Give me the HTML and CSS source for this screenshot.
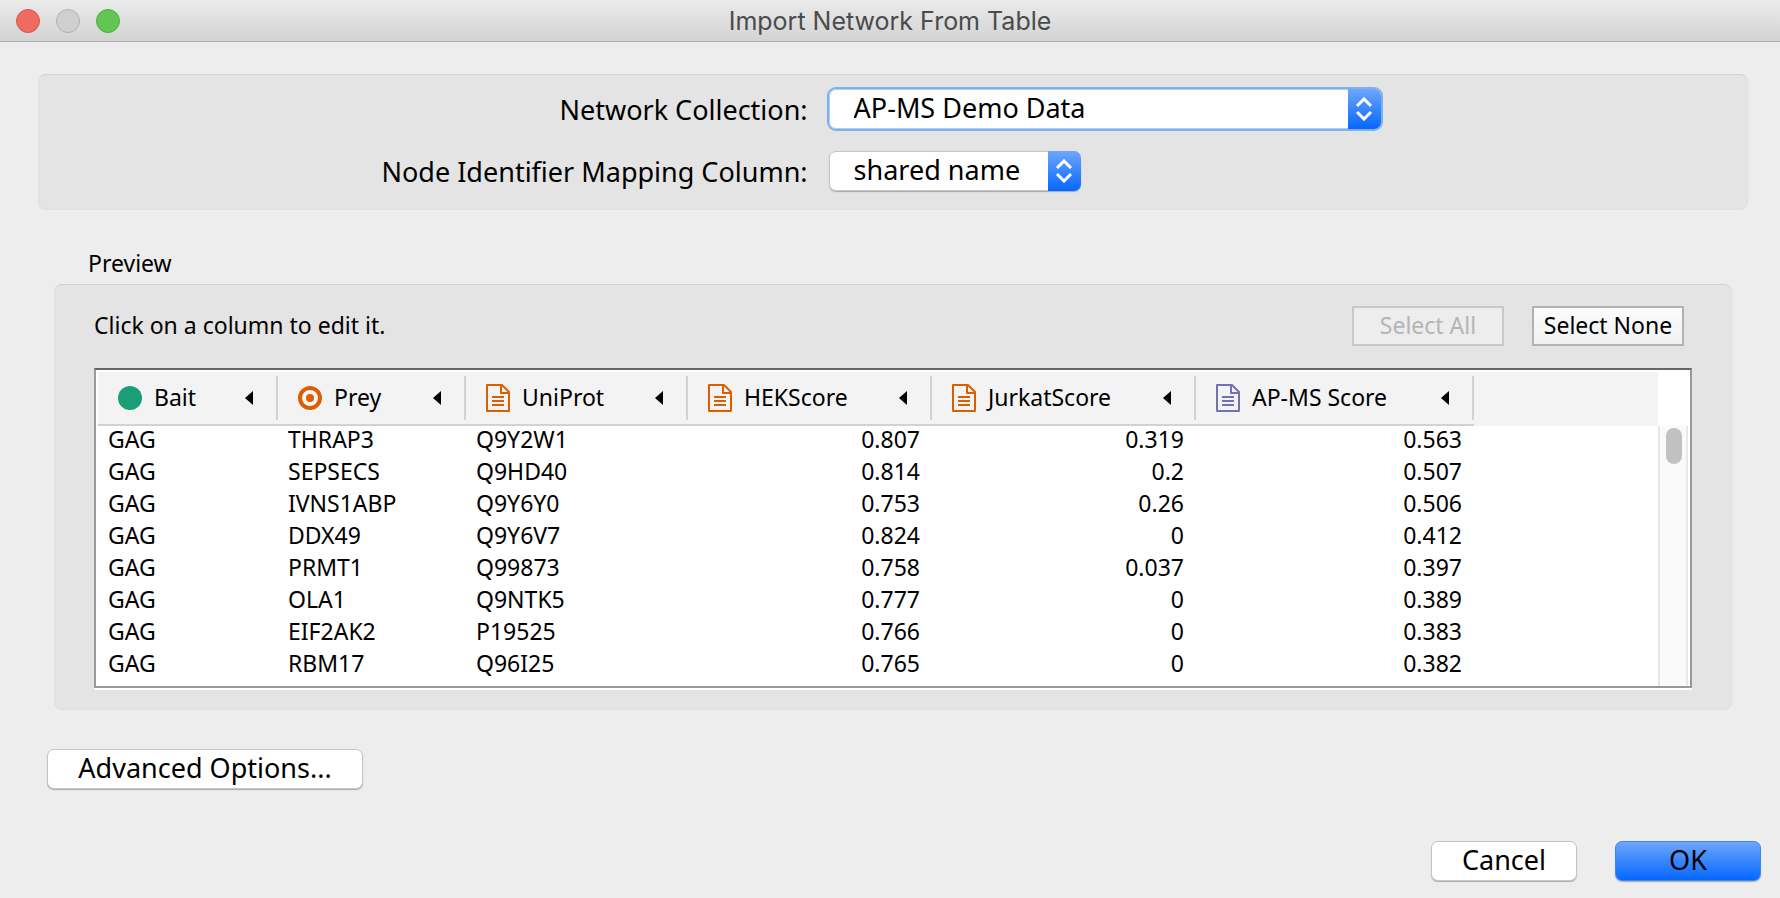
FILE: index.html
```html
<!DOCTYPE html>
<html lang="en">
<head>
<meta charset="utf-8">
<title>Import Network From Table</title>
<link rel="stylesheet" href="styles.css">
</head>
<body>
<svg class="defs" aria-hidden="true">
  <symbol id="doc" viewBox="0 0 24 28">
    <path d="M1 1H16L23 8V27H1Z M15 1V9H23" fill="none" stroke="currentColor" stroke-width="2" stroke-linejoin="round"/>
    <path d="M6 13H18M6 17H18M6 21H18" fill="none" stroke="currentColor" stroke-width="2"/>
  </symbol>
  <symbol id="tri" viewBox="0 0 8 14"><path d="M0 7L8 0V14Z" fill="currentColor"/></symbol>
  <symbol id="updown" viewBox="0 0 16 24">
    <path d="M1 9L8 2L15 9M1 15L8 22L15 15" fill="none" stroke="currentColor" stroke-width="3"/>
  </symbol>
</svg>
<div class="window">
  <header class="titlebar">
    <div class="lights">
      <button class="light light-close" type="button" aria-label="Close"></button>
      <button class="light light-min" type="button" aria-label="Minimize" disabled></button>
      <button class="light light-zoom" type="button" aria-label="Zoom"></button>
    </div>
    <h1 class="title">Import Network From Table</h1>
  </header>
  <main class="content">
    <section class="panel form">
      <label for="collection">Network Collection:</label>
      <div class="combo combo-wide combo-focus">
        <select id="collection"><option>AP-MS Demo Data</option></select>
        <span class="combo-arrow"><svg><use href="#updown"/></svg></span>
      </div>
      <label for="mapping">Node Identifier Mapping Column:</label>
      <div class="combo">
        <select id="mapping"><option>shared name</option></select>
        <span class="combo-arrow"><svg><use href="#updown"/></svg></span>
      </div>
    </section>
    <section class="preview">
      <h2 class="preview-title">Preview</h2>
      <div class="panel preview-panel">
        <div class="toolbar">
          <p class="hint">Click on a column to edit it.</p>
          <button class="flat" type="button" disabled>Select All</button>
          <button class="flat" type="button">Select None</button>
        </div>
        <div class="grid-frame">
          <table class="grid">
            <colgroup><col class="c1"><col class="c2"><col class="c3"><col class="c4"><col class="c5"><col class="c6"><col></colgroup>
            <thead>
              <tr>
                <th><div class="head"><svg class="node green" viewBox="0 0 24 24"><circle cx="12" cy="12" r="12" fill="currentColor"/></svg><span>Bait</span><svg class="tri"><use href="#tri"/></svg></div></th>
                <th><div class="head"><svg class="node orange" viewBox="0 0 24 24"><circle cx="12" cy="12" r="10" fill="none" stroke="currentColor" stroke-width="4"/><circle cx="12" cy="12" r="4" fill="currentColor"/></svg><span>Prey</span><svg class="tri"><use href="#tri"/></svg></div></th>
                <th><div class="head"><svg class="doc orange"><use href="#doc"/></svg><span>UniProt</span><svg class="tri"><use href="#tri"/></svg></div></th>
                <th><div class="head"><svg class="doc orange"><use href="#doc"/></svg><span>HEKScore</span><svg class="tri"><use href="#tri"/></svg></div></th>
                <th><div class="head"><svg class="doc orange"><use href="#doc"/></svg><span>JurkatScore</span><svg class="tri"><use href="#tri"/></svg></div></th>
                <th><div class="head"><svg class="doc purple"><use href="#doc"/></svg><span>AP-MS Score</span><svg class="tri"><use href="#tri"/></svg></div></th>
                <td class="filler"></td>
              </tr>
            </thead>
            <tbody>
              <tr><td>GAG</td><td>THRAP3</td><td>Q9Y2W1</td><td class="num">0.807</td><td class="num">0.319</td><td class="num">0.563</td><td></td></tr>
              <tr><td>GAG</td><td>SEPSECS</td><td>Q9HD40</td><td class="num">0.814</td><td class="num">0.2</td><td class="num">0.507</td><td></td></tr>
              <tr><td>GAG</td><td>IVNS1ABP</td><td>Q9Y6Y0</td><td class="num">0.753</td><td class="num">0.26</td><td class="num">0.506</td><td></td></tr>
              <tr><td>GAG</td><td>DDX49</td><td>Q9Y6V7</td><td class="num">0.824</td><td class="num">0</td><td class="num">0.412</td><td></td></tr>
              <tr><td>GAG</td><td>PRMT1</td><td>Q99873</td><td class="num">0.758</td><td class="num">0.037</td><td class="num">0.397</td><td></td></tr>
              <tr><td>GAG</td><td>OLA1</td><td>Q9NTK5</td><td class="num">0.777</td><td class="num">0</td><td class="num">0.389</td><td></td></tr>
              <tr><td>GAG</td><td>EIF2AK2</td><td>P19525</td><td class="num">0.766</td><td class="num">0</td><td class="num">0.383</td><td></td></tr>
              <tr><td>GAG</td><td>RBM17</td><td>Q96I25</td><td class="num">0.765</td><td class="num">0</td><td class="num">0.382</td><td></td></tr>
            </tbody>
          </table>
          <div class="scroll"><div class="thumb"></div></div>
        </div>
      </div>
    </section>
    <div class="advanced"><button class="push push-wide" type="button">Advanced Options...</button></div>
    <footer class="actions">
      <button class="push" type="button">Cancel</button>
      <button class="push push-default" type="button">OK</button>
    </footer>
  </main>
</div>
</body>
</html>
```

FILE: styles.css
```css
* { box-sizing: border-box; }
body {
  margin: 0;
  background: #ededed;
  color: #000;
  font-family: "Noto Sans", "Open Sans", sans-serif;
  font-size: 27px;
}
button, select { font: inherit; color: inherit; margin: 0; }
h1, h2, p { margin: 0; font-weight: 400; }
.defs { display: none; }
.window { min-height: 100vh; display: flex; flex-direction: column; background: #ededed; }

.titlebar {
  display: grid;
  grid-template-columns: 1fr auto 1fr;
  align-items: center;
  height: 42px;
  padding: 0 16px;
  background: linear-gradient(#ebebeb, #d3d3d3);
  border-bottom: 1px solid #adadad;
}
.lights { display: flex; gap: 16px; }
.light { width: 24px; height: 24px; padding: 0; border: 1px solid; border-radius: 50%; }
.light-close { background: #ed6b5f; border-color: #d8564b; }
.light-min { background: #d0d0d0; border-color: #b2b2b2; }
.light-zoom { background: #62c655; border-color: #51ac45; }
.title { font-family: Inter, sans-serif; font-size: 25px; line-height: 40px; color: #4b4b4b; }

.content { flex: 1; display: flex; flex-direction: column; padding: 32px 19px 17px 38px; }
.panel {
  background: #e4e4e4;
  border: 1px solid #dedede;
  border-top-color: #d2d2d2;
  border-radius: 8px;
}
.form {
  display: grid;
  grid-template-columns: 45% 1fr;
  gap: 22px 21px;
  align-items: center;
  margin-right: 13px;
  padding: 14px 0 18px;
}
.form label { text-align: right; line-height: 38px; padding-top: 2px; }
.combo {
  display: flex;
  position: relative;
  width: 252px;
  height: 40px;
  border-radius: 7px;
  box-shadow: 0 1px 1px #a8a8a8;
}
.combo-wide { width: 552px; }
.combo select {
  appearance: none;
  width: 100%;
  height: 40px;
  padding: 0 40px 2px 24px;
  border: 1px solid #c4c4c4;
  border-radius: 7px;
  background: #fff;
  line-height: 36px;
  outline: none;
}
.combo-focus { box-shadow: 0 0 0 2px #7fb1e8; }
.combo-focus select { border-color: #a9cff8; }
.combo-arrow {
  position: absolute;
  top: 0;
  right: 0;
  display: flex;
  align-items: center;
  justify-content: center;
  width: 33px;
  height: 40px;
  border-radius: 0 7px 7px 0;
  background: linear-gradient(#6ea6fb, #0567ff);
  color: #fff;
  pointer-events: none;
}
.combo-arrow svg { width: 16px; height: 24px; }

.preview { margin: 38px 29px 0 16px; font-size: 23px; }
.preview-title { padding-left: 34px; font-size: 23px; line-height: 30px; padding-bottom: 6px; }
.preview-panel { padding: 21px 39px 21px; }
.toolbar { display: flex; align-items: center; margin-right: 8px; }
.hint { flex: 1; padding-bottom: 2px; }
.flat {
  width: 152px;
  height: 40px;
  margin-left: 28px;
  padding: 0 0 2px;
  border: 2px solid #b2b2b2;
  background: linear-gradient(#fcfcfc, #f1f1f1);
  line-height: 32px;
  white-space: nowrap;
}
.flat:disabled { border-color: #c9c9c9; background: #ededed; color: #b5b5b5; }
.grid-frame {
  display: flex;
  margin-top: 22px;
  padding: 2px 2px 0;
  border: 2px solid #999;
  border-top-color: #666;
  background: #fff;
  box-shadow: 0 2px #fff;
}
.grid { flex: 1; table-layout: fixed; border-collapse: collapse; width: 0; margin-bottom: 4px; }
.c1 { width: 180px; }
.c2 { width: 188px; }
.c3 { width: 222px; }
.c4 { width: 244px; }
.c5 { width: 264px; }
.c6 { width: 278px; }
.grid th { padding: 0; background: #f3f3f3; font-weight: 400; box-shadow: inset 0 -2px #d2d2d2; }
.grid .filler { background: #f3f3f3; }
.head {
  display: flex;
  align-items: center;
  height: 44px;
  margin: 4px 0 6px;
  padding: 0 23px 0 20px;
  border-right: 2px solid #d2d2d2;
}
.head span { flex: 1; padding: 0 0 2px 12px; text-align: left; white-space: nowrap; }
.node { width: 24px; height: 24px; }
.doc { width: 24px; height: 28px; }
.tri { width: 8px; height: 14px; }
.green { color: #1b9e77; }
.orange { color: #d95f02; }
.purple { color: #7570b3; }
.grid td { padding: 0 12px 6px 10px; line-height: 26px; }
.grid .num { text-align: right; }
.scroll {
  width: 30px;
  margin-top: 54px;
  padding: 2px 4px 0 6px;
  border: solid #e8e8e8;
  border-width: 0 2px;
  background: #fafafa;
}
.thumb { width: 16px; height: 36px; border-radius: 8px; background: #c1c1c1; }

.push {
  width: 146px;
  height: 40px;
  padding: 0 0 2px;
  border: 1px solid #c6c6c6;
  border-radius: 7px;
  background: #fff;
  box-shadow: 0 1px 1px #aaa;
  line-height: 36px;
}
.push-wide { width: 316px; }
.push-default { border-color: #3f87f5; background: linear-gradient(#6ea6fb, #0567ff); }
.advanced { display: flex; margin: 39px 0 0 9px; }
.actions { display: flex; justify-content: flex-end; gap: 38px; margin-top: auto; }
```
